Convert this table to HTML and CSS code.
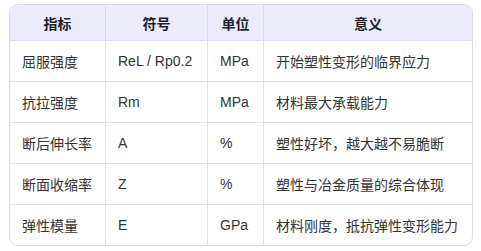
FILE: index.html
```html
<!DOCTYPE html>
<html lang="zh">
<head>
<meta charset="utf-8">
<link rel="stylesheet" href="styles.css">
</head>
<body>
<div class="wrap">
  <table class="tbl">
    <colgroup>
      <col class="c1"><col class="c2"><col class="c3"><col class="c4">
    </colgroup>
    <thead>
      <tr><th>指标</th><th>符号</th><th>单位</th><th>意义</th></tr>
    </thead>
    <tbody>
      <tr><td>屈服强度</td><td>ReL / Rp0.2</td><td>MPa</td><td>开始塑性变形的临界应力</td></tr>
      <tr><td>抗拉强度</td><td>Rm</td><td>MPa</td><td>材料最大承载能力</td></tr>
      <tr><td>断后伸长率</td><td>A</td><td>%</td><td>塑性好坏，越大越不易脆断</td></tr>
      <tr><td>断面收缩率</td><td>Z</td><td>%</td><td>塑性与冶金质量的综合体现</td></tr>
      <tr><td>弹性模量</td><td>E</td><td>GPa</td><td>材料刚度，抵抗弹性变形能力</td></tr>
    </tbody>
  </table>
</div>
</body>
</html>
```
FILE: styles.css
```css
html, body { margin: 0; padding: 0; background: #fff; }
body { padding: 4px 8px 0 9px; font-family: "Liberation Sans", "Noto Sans CJK SC", sans-serif; font-size: 14px; color: #333; }
.wrap { border: 1px solid #dcdce6; border-radius: 9px; overflow: hidden; }
.tbl { width: 100%; border-collapse: separate; border-spacing: 0; table-layout: fixed; }
.c1 { width: 96px; }
.c2 { width: 102px; }
.c3 { width: 56px; }
.c4 { width: 208px; }
th, td { padding: 0 12px; text-align: left; border-right: 1px solid #e2e2e2; border-bottom: 1px solid #e2e2e2; white-space: nowrap; }
th:last-child, td:last-child { border-right: none; }
tbody tr:last-child td { border-bottom: none; }
th { height: 35px; background: #ebebfc; text-align: center; font-weight: bold; color: #1e1e2e; border-right-color: #d9d9ee; border-bottom-color: #dcdcee; }
td { height: 40px; }
```
